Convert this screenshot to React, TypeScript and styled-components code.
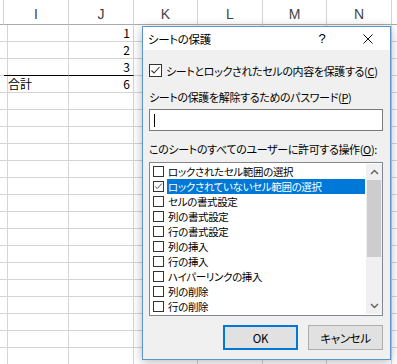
import styled, { createGlobalStyle } from 'styled-components';

const GlobalStyle = createGlobalStyle`
  html, body {
    margin: 0;
    padding: 0;
    background: #ffffff;
    overflow: hidden;
  }
  #root {
    position: relative;
    width: 397px;
    height: 364px;
    overflow: hidden;
  }
`;

const jp = `"Noto Sans CJK JP", "Noto Sans", sans-serif`;

const Sheet = styled.div`
  display: grid;
  grid-template-columns: 4px 65px 65px 64px 65px 64px 65px 40px;
  grid-template-rows: 25px;
  grid-auto-rows: 17px;
  font-family: ${jp};
`;

const HeaderCell = styled.div`
  box-sizing: border-box;
  border-right: 1px solid #d4d4d4;
  border-bottom: 1px solid #ababab;
  background: #ffffff;
  color: #444444;
  font-family: "Liberation Sans", Arial, sans-serif;
  font-size: 14px;
  display: flex;
  align-items: center;
  justify-content: center;
  padding-top: 4px;
`;

const Cell = styled.div<{ $align?: 'left' | 'right'; $total?: boolean }>`
  box-sizing: border-box;
  border-right: 1px solid #d4d4d4;
  border-bottom: 1px solid ${(p) => (p.$total ? '#000000' : '#d4d4d4')};
  color: #000000;
  font-size: 12px;
  line-height: 16px;
  display: flex;
  align-items: center;
  justify-content: ${(p) => (p.$align === 'right' ? 'flex-end' : 'flex-start')};
  padding: 0 3px 0 4px;
  white-space: nowrap;
  font-feature-settings: "palt" 1;
`;

const Dialog = styled.div`
  position: absolute;
  left: 142px;
  top: 26px;
  width: 249px;
  height: 334px;
  box-sizing: border-box;
  border: 1px solid #5c93d2;
  background: #f0f0f0;
  box-shadow: 0 2px 10px rgba(0, 0, 0, 0.28);
  display: flex;
  flex-direction: column;
  font-family: ${jp};
  font-size: 11px;
  letter-spacing: -0.35px;
  font-feature-settings: "palt" 1;
  color: #000000;
`;

const TitleBar = styled.div`
  height: 23px;
  background: #ffffff;
  display: flex;
  align-items: center;
  padding-left: 5px;
`;

const Title = styled.span`
  flex: 1;
  font-size: 11.5px;
  padding-top: 1px;
`;

const HelpButton = styled.span`
  width: 14px;
  font-family: "Liberation Sans", Arial, sans-serif;
  font-size: 13px;
  text-align: center;
  margin-right: 30px;
`;

const CloseButton = styled.span`
  width: 18px;
  display: flex;
  align-items: center;
  justify-content: center;
  margin-right: 13px;
`;

const Body = styled.div`
  flex: 1;
  display: flex;
  flex-direction: column;
  padding: 14px 7px 0 6px;
`;

const CheckRow = styled.label`
  display: flex;
  align-items: center;
  gap: 4px;
  height: 13px;
  white-space: nowrap;
`;

const Box = styled.span<{ $size: number }>`
  box-sizing: border-box;
  width: ${(p) => p.$size}px;
  height: ${(p) => p.$size}px;
  border: 1px solid #333333;
  background: #ffffff;
  display: flex;
  align-items: center;
  justify-content: center;
  flex: none;
`;

const FieldLabel = styled.div<{ $top: number }>`
  margin-top: ${(p) => p.$top}px;
  height: 14px;
  line-height: 14px;
  white-space: nowrap;
`;

const Underline = styled.span`
  text-decoration: underline;
`;

const PasswordInput = styled.div`
  margin-top: 5px;
  height: 22px;
  box-sizing: border-box;
  border: 1px solid #7a7a7a;
  background: #ffffff;
  display: flex;
  align-items: center;
  padding-left: 4px;
`;

const Caret = styled.span`
  width: 1px;
  height: 13px;
  background: #000000;
`;

const ListBox = styled.div`
  margin-top: 6px;
  height: 154px;
  box-sizing: border-box;
  border: 1px solid #828790;
  background: #ffffff;
  display: flex;
  padding: 1px 0 1px 3px;
`;

const Items = styled.div`
  flex: 1;
  display: flex;
  flex-direction: column;
  overflow: hidden;
  font-size: 10.5px;
`;

const Item = styled.div`
  height: 15px;
  display: flex;
  align-items: center;
  gap: 3px;
  white-space: nowrap;
`;

const ItemText = styled.span<{ $selected?: boolean }>`
  height: 15px;
  line-height: 15px;
  padding-left: 1px;
  flex: 1;
  margin-right: 1px;
  background: ${(p) => (p.$selected ? '#0078d7' : 'transparent')};
  color: ${(p) => (p.$selected ? '#ffffff' : '#000000')};
`;

const ScrollBar = styled.div`
  width: 16px;
  background: #f0f0f0;
  display: flex;
  flex-direction: column;
  align-items: stretch;
`;

const ArrowCell = styled.div`
  height: 16px;
  display: flex;
  align-items: center;
  justify-content: center;
`;

const Track = styled.div`
  flex: 1;
  display: flex;
  flex-direction: column;
`;

const Thumb = styled.div`
  height: 77px;
  background: #cdcdcd;
  margin: 0 1px;
`;

const Buttons = styled.div`
  display: flex;
  justify-content: flex-end;
  gap: 10px;
  margin-top: 9px;
`;

const Button = styled.div<{ $primary?: boolean }>`
  width: 75px;
  height: 25px;
  box-sizing: border-box;
  border: ${(p) => (p.$primary ? '2px solid #0078d7' : '1px solid #adadad')};
  background: #e1e1e1;
  display: flex;
  align-items: center;
  justify-content: center;
  font-size: 11.5px;
`;

const Check = ({ size }: { size: number }) => (
  <svg width={size - 2} height={size - 2} viewBox="0 0 11 11">
    <polyline points="1.5,5.5 4,8 9.5,2" fill="none" stroke="#333" strokeWidth="1.1" />
  </svg>
);

const Chevron = ({ up }: { up?: boolean }) => (
  <svg width="9" height="6" viewBox="0 0 9 6">
    <polyline
      points={up ? '1,5 4.5,1.5 8,5' : '1,1 4.5,4.5 8,1'}
      fill="none"
      stroke="#606060"
      strokeWidth="1.4"
    />
  </svg>
);

const columns = ['', 'I', 'J', 'K', 'L', 'M', 'N', ''];

const cellData: Record<number, { i?: string; j?: string }> = {
  0: { j: '1' },
  1: { j: '2' },
  2: { j: '3' },
  3: { i: '合計', j: '6' },
};

const items = [
  { label: 'ロックされたセル範囲の選択', checked: false },
  { label: 'ロックされていないセル範囲の選択', checked: true, selected: true },
  { label: 'セルの書式設定', checked: false },
  { label: '列の書式設定', checked: false },
  { label: '行の書式設定', checked: false },
  { label: '列の挿入', checked: false },
  { label: '行の挿入', checked: false },
  { label: 'ハイパーリンクの挿入', checked: false },
  { label: '列の削除', checked: false },
  { label: '行の削除', checked: false },
];

export default function App() {
  const rows = Array.from({ length: 21 }, (_, r) => r);
  return (
    <>
      <GlobalStyle />
      <Sheet>
        {columns.map((c, i) => (
          <HeaderCell key={`h${i}`}>{c}</HeaderCell>
        ))}
        {rows.map((r) =>
          columns.map((_, c) => {
            const data = cellData[r] || {};
            const total = r === 2 && (c === 1 || c === 2);
            let text = '';
            if (c === 1 && data.i) text = data.i;
            if (c === 2 && data.j) text = data.j;
            return (
              <Cell key={`${r}-${c}`} $align={c === 2 ? 'right' : 'left'} $total={total}>
                {text}
              </Cell>
            );
          })
        )}
      </Sheet>

      <Dialog>
        <TitleBar>
          <Title>シートの保護</Title>
          <HelpButton>?</HelpButton>
          <CloseButton>
            <svg width="10" height="10" viewBox="0 0 10 10">
              <path d="M0.5,0.5 L9.5,9.5 M9.5,0.5 L0.5,9.5" stroke="#111" strokeWidth="1" />
            </svg>
          </CloseButton>
        </TitleBar>
        <Body>
          <CheckRow>
            <Box $size={13}>
              <Check size={13} />
            </Box>
            <span>
              シートとロックされたセルの内容を保護する(<Underline>C</Underline>)
            </span>
          </CheckRow>
          <FieldLabel $top={13}>
            シートの保護を解除するためのパスワード(<Underline>P</Underline>)
          </FieldLabel>
          <PasswordInput>
            <Caret />
          </PasswordInput>
          <FieldLabel $top={11}>
            このシートのすべてのユーザーに許可する操作(<Underline>O</Underline>):
          </FieldLabel>
          <ListBox>
            <Items>
              {items.map((it) => (
                <Item key={it.label}>
                  <Box $size={11}>{it.checked && <Check size={11} />}</Box>
                  <ItemText $selected={it.selected}>{it.label}</ItemText>
                </Item>
              ))}
            </Items>
            <ScrollBar>
              <ArrowCell>
                <Chevron up />
              </ArrowCell>
              <Track>
                <Thumb />
              </Track>
              <ArrowCell>
                <Chevron />
              </ArrowCell>
            </ScrollBar>
          </ListBox>
          <Buttons>
            <Button $primary>OK</Button>
            <Button>キャンセル</Button>
          </Buttons>
        </Body>
      </Dialog>
    </>
  );
}
